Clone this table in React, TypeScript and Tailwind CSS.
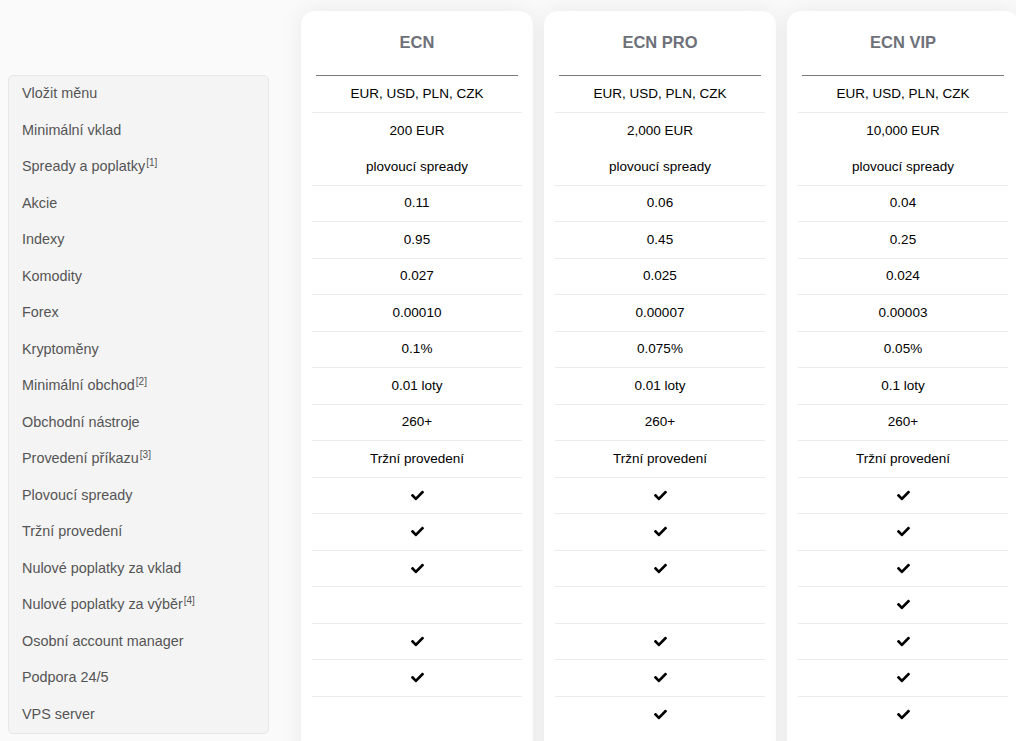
import React from 'react';
import { FaCheck } from 'react-icons/fa';

type Cell = string | boolean;

interface Row {
  label: string;
  note?: string;
  divider: boolean;
  values: [Cell, Cell, Cell];
}

const ROWS: Row[] = [
  { label: 'Vložit měnu', divider: true, values: ['EUR, USD, PLN, CZK', 'EUR, USD, PLN, CZK', 'EUR, USD, PLN, CZK'] },
  { label: 'Minimální vklad', divider: false, values: ['200 EUR', '2,000 EUR', '10,000 EUR'] },
  { label: 'Spready a poplatky', note: '[1]', divider: true, values: ['plovoucí spready', 'plovoucí spready', 'plovoucí spready'] },
  { label: 'Akcie', divider: true, values: ['0.11', '0.06', '0.04'] },
  { label: 'Indexy', divider: true, values: ['0.95', '0.45', '0.25'] },
  { label: 'Komodity', divider: true, values: ['0.027', '0.025', '0.024'] },
  { label: 'Forex', divider: true, values: ['0.00010', '0.00007', '0.00003'] },
  { label: 'Kryptoměny', divider: true, values: ['0.1%', '0.075%', '0.05%'] },
  { label: 'Minimální obchod', note: '[2]', divider: true, values: ['0.01 loty', '0.01 loty', '0.1 loty'] },
  { label: 'Obchodní nástroje', divider: true, values: ['260+', '260+', '260+'] },
  { label: 'Provedení příkazu', note: '[3]', divider: true, values: ['Tržní provedení', 'Tržní provedení', 'Tržní provedení'] },
  { label: 'Plovoucí spready', divider: true, values: [true, true, true] },
  { label: 'Tržní provedení', divider: true, values: [true, true, true] },
  { label: 'Nulové poplatky za vklad', divider: true, values: [true, true, true] },
  { label: 'Nulové poplatky za výběr', note: '[4]', divider: true, values: [false, false, true] },
  { label: 'Osobní account manager', divider: true, values: [true, true, true] },
  { label: 'Podpora 24/5', divider: true, values: [true, true, true] },
  { label: 'VPS server', divider: false, values: [false, true, true] },
];

const PLANS = ['ECN', 'ECN PRO', 'ECN VIP'];

function PlanCard({ name, index }: { name: string; index: number }) {
  return (
    <div className="w-[232px] shrink-0 bg-white rounded-[14px] shadow-[0_0_22px_rgba(0,0,0,0.07)] pb-10">
      <div className="h-16 flex items-center justify-center pb-0.5 text-[16.5px] font-bold text-[#6e7179]">{name}</div>
      <div className="mx-[15px] h-px bg-[#7a7a7a]" />
      {ROWS.map((row, i) => {
        const v = row.values[index];
        return (
          <div
            key={i}
            className={`mx-[11px] h-[36.5px] flex items-center justify-center text-[13.5px] text-black ${row.divider ? 'border-b border-[#e9ebee]' : ''}`}
          >
            {typeof v === 'string' ? v : v ? <FaCheck size={13} className="text-black" /> : null}
          </div>
        );
      })}
    </div>
  );
}

export default function App() {
  return (
    <div className="min-h-[741px] bg-[#fafafa] overflow-hidden font-['Liberation_Sans',Arial,sans-serif]">
      <div className="flex items-start pt-[11px] pl-2">
        <div className="w-[261px] shrink-0 mt-16 bg-[#f4f4f4] border border-[#e7e7e7] rounded-[5px]">
          {ROWS.map((row, i) => (
            <div key={i} className="h-[36.5px] flex items-center pl-[13px] text-[14.4px] text-[#555]">
              <span>
                {row.label}
                {row.note && <sup className="text-[10px] ml-px">{row.note}</sup>}
              </span>
            </div>
          ))}
        </div>
        <div className="flex gap-[11px] ml-[32px]">
          {PLANS.map((p, i) => (
            <PlanCard key={p} name={p} index={i} />
          ))}
        </div>
      </div>
    </div>
  );
}
